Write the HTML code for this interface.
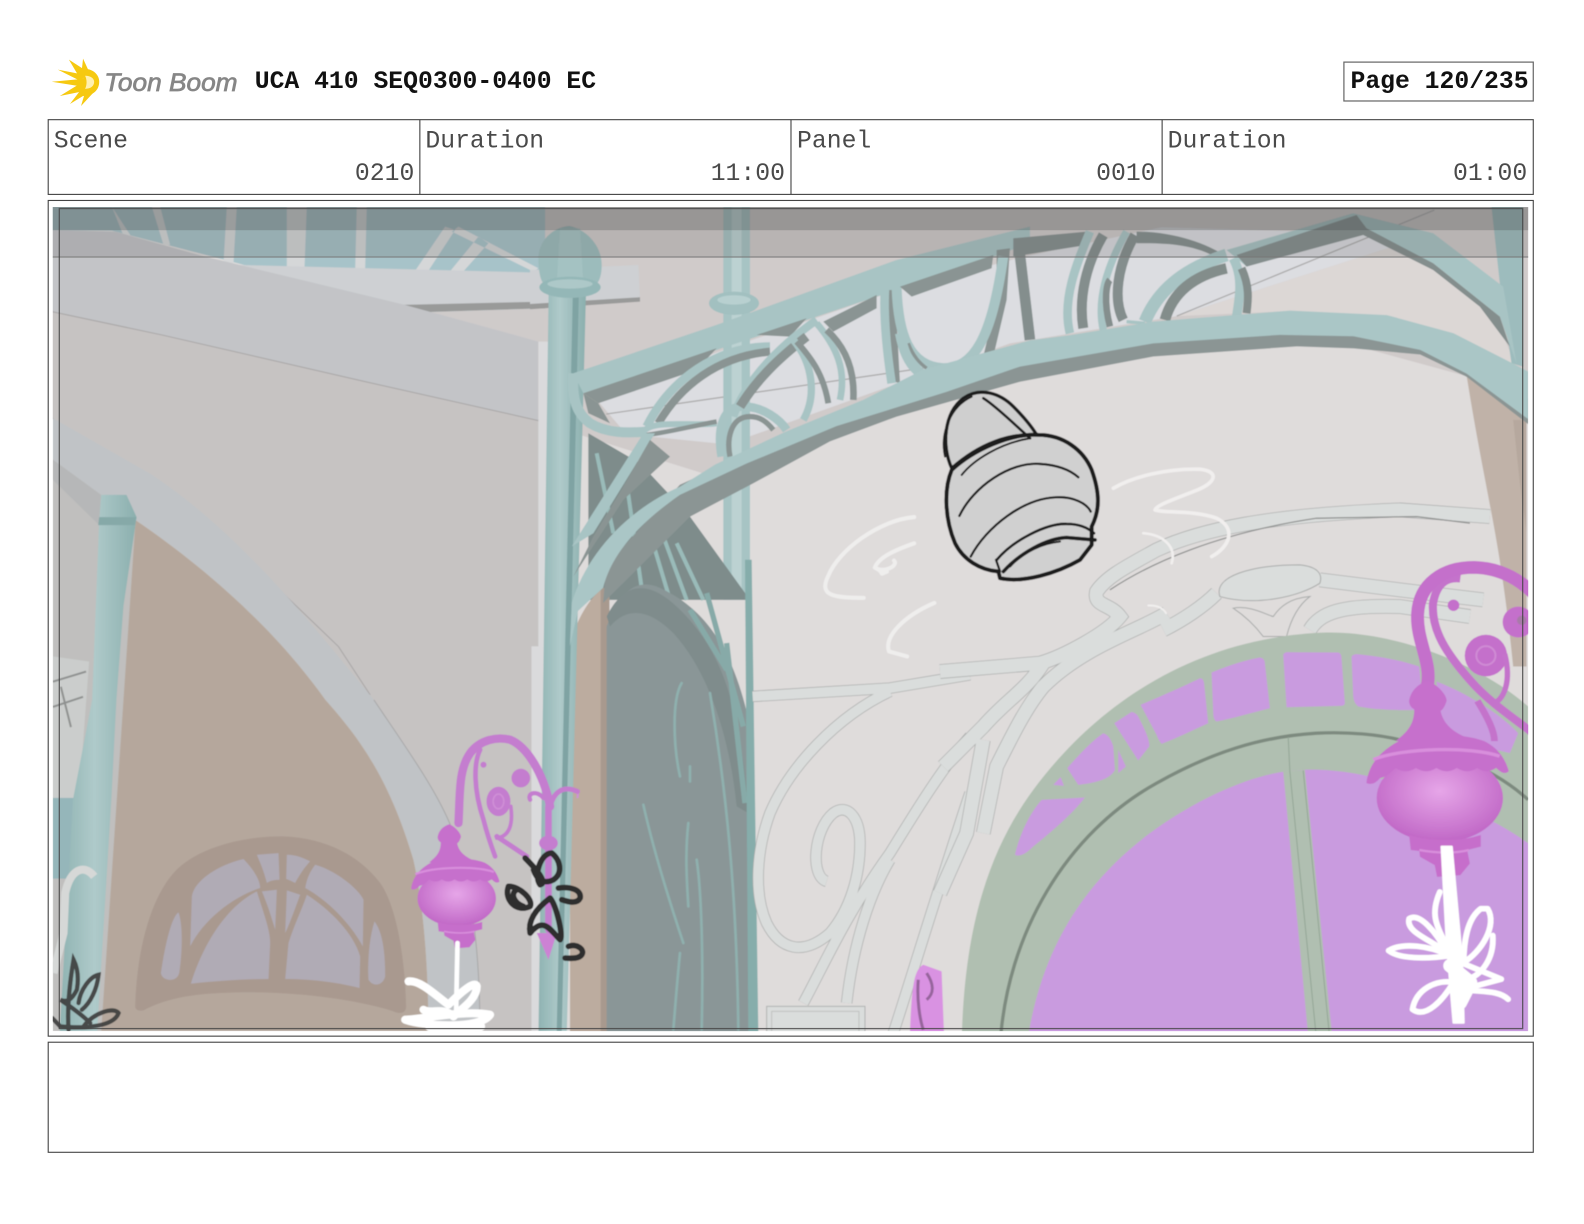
<!DOCTYPE html>
<html><head><meta charset="utf-8"><title>Storyboard page 120</title>
<style>html,body{margin:0;padding:0;background:#fff;width:1584px;height:1224px;overflow:hidden}svg{display:block}
.m{font-family:"Liberation Mono",monospace;font-size:24.5px;fill:#4a4a4a}
.b{font-weight:bold;fill:#111}
</style></head><body>
<svg width="1584" height="1224" viewBox="0 0 1568 1212" xmlns="http://www.w3.org/2000/svg" style="overflow:hidden">
<defs>
<clipPath id="pic"><rect x="52" y="205" width="1461" height="816"/></clipPath>
<filter id="soft" x="0" y="0" width="100%" height="100%"><feGaussianBlur stdDeviation="0.55"/></filter>
<radialGradient id="gl" cx="50%" cy="42%" r="58%"><stop offset="0" stop-color="#e6a6e8"/><stop offset="1" stop-color="#c067c6"/></radialGradient>
<linearGradient id="col" x1="0" x2="1" y1="0" y2="0"><stop offset="0" stop-color="#8fb3b2"/><stop offset=".45" stop-color="#afcaca"/><stop offset="1" stop-color="#8bafae"/></linearGradient>
<g id="lampbody">
<path d="M320,480C325,450 345,430 375,420C400,430 430,460 430,480C425,495 420,505 412,510C420,550 450,575 500,595L280,600C320,570 335,545 335,505C325,500 320,490 320,480Z" fill="#c670cc"/>
<ellipse cx="410" cy="770" rx="185" ry="132" fill="url(#gl)"/>
<path d="M195,725C200,680 225,635 290,600C360,575 470,575 540,600C590,625 605,665 612,690C600,700 590,695 575,680Q545,700 520,680Q490,700 460,680Q430,700 400,680Q370,700 340,680Q310,700 280,680Q250,710 235,710Q215,735 195,725Z" fill="#c670cc"/>
<path d="M215,655C300,620 500,615 585,645" fill="none" stroke="#d88fdc" stroke-width="10"/>
<path d="M320,880C380,900 470,900 530,880L530,915L490,925L498,965L470,1000L402,1005L395,970L352,945L350,928L325,925Z" fill="#c66ecb"/>
<path d="M350,925C400,935 460,935 495,925" fill="none" stroke="#d88fdc" stroke-width="7"/>
</g>
</defs>

<!-- logo -->
<g fill="#f6c910">
<path d="M85,70L68,59L78,76Z"/><path d="M88,71L82,58L80,76Z"/>
<path d="M83,74L57,69L81,81Z"/><path d="M83,78L51,81L83,86Z"/>
<path d="M82,81L59,95L84,90Z"/><path d="M82,86L69,103L87,92Z"/>
<path d="M85,88L80,105L92,92Z"/>
<path d="M82,68C92,68 98,74 98,81C98,89 92,95 82,95Z"/>
</g>
<path d="M84,75C90,75 93,78 93,81C93,85 90,88 84,88C86,84 86,79 84,75Z" fill="#fff0b0"/>
<text x="103" y="90" font-family="'Liberation Sans',sans-serif" font-style="italic" font-size="25" fill="#868686" stroke="#868686" stroke-width=".7" textLength="132" lengthAdjust="spacingAndGlyphs">Toon Boom</text>

<text x="252" y="87" class="m b">UCA 410 SEQ0300-0400 EC</text>
<rect x="1330.5" y="61.5" width="187.5" height="38.5" fill="#fff" stroke="#666" stroke-width="1.2"/>
<text x="1337" y="87" class="m b">Page 120/235</text>

<!-- info table -->
<rect x="47.5" y="118.5" width="1470.5" height="74" fill="#fff" stroke="#444" stroke-width="1.1"/>
<path d="M415.5,118.5V192.5M783,118.5V192.5M1150.5,118.5V192.5" stroke="#444" stroke-width="1.1"/>
<text x="53" y="146" class="m">Scene</text>
<text x="421" y="146" class="m">Duration</text>
<text x="789" y="146" class="m">Panel</text>
<text x="1156" y="146" class="m">Duration</text>
<text x="410" y="178" class="m" text-anchor="end">0210</text>
<text x="777" y="178" class="m" text-anchor="end">11:00</text>
<text x="1144" y="178" class="m" text-anchor="end">0010</text>
<text x="1512" y="178" class="m" text-anchor="end">01:00</text>

<!-- frames -->
<rect x="47.5" y="198.5" width="1470.5" height="827.5" fill="#fff" stroke="#444" stroke-width="1.1"/>
<rect x="47.5" y="1032" width="1470.5" height="109" fill="#fff" stroke="#444" stroke-width="1.1"/>

<g clip-path="url(#pic)"><g filter="url(#soft)">
<rect x="52" y="205" width="1461" height="816" fill="#dfdcdb"/>

<!-- ceiling right -->
<path d="M530,205H1513V420L1450,372L1260,320L1000,350L700,470L540,420Z" fill="#d0cbca"/>
<path d="M590,395L720,345L880,290L1010,255L1150,225L1350,231L1389,241L1165,313L1000,340L720,440L620,430Z" fill="#dcdde1"/>
<path d="M1165,313L1389,241L1470,290L1500,360L1280,308Z" fill="#dcd7d5"/>
<path d="M1165,313L1420,208" stroke="#a9a8a8" stroke-width="1.2" fill="none"/>
<path d="M600,410L1000,352" stroke="#a9a8a8" stroke-width="1.2" fill="none"/>

<!-- Z11 left upper structures -->
<g transform="translate(44.5,198) scale(.33)">
<path d="M20,20H1500V340L1130,340L560,185L200,92L20,90Z" fill="#a7c3c9"/>
<path d="M200,20L240,120L265,120L200,20ZM320,20L355,135L375,135L345,20ZM545,20H575L565,190L535,190ZM725,20H785L778,210H725ZM935,20H965L960,215H930ZM1200,80L1105,220H1145L1230,90ZM1300,110L1210,220H1250L1330,130ZM1240,80L1480,205L1465,215L1220,95Z" fill="#d5d7d8"/>
<path d="M580,195L1480,218L1500,310L1090,318Z" fill="#ced0d3"/>
<path d="M1060,315L1500,305V325L1130,337Z" fill="#999a99"/>
<path d="M1130,337L1500,325V430L1480,425Z" fill="#cfcbca"/>
<path d="M20,90L210,95L480,170L1080,315L1480,425V662L960,545L350,405L20,335Z" fill="#c3c4c7"/>
<path d="M20,335L350,405L960,545L1480,662V1500H985L600,1080L290,820L20,655Z" fill="#c6c3c2"/>
<path d="M20,335L350,405L960,545L1480,662M20,655L290,820L620,1090L880,1340L985,1500" fill="none" stroke="#a8a6a6" stroke-width="3"/>
<path d="M1480,425H1520V1500H1480Z" fill="#dadadc"/>
</g>
<path d="M365,688H530V1021H470L445,815Z" fill="#c6c3c2"/>
<rect x="526" y="640" width="14" height="381" fill="#dadadc"/>

<!-- arch band and brown -->
<path d="M52,414L150,470C240,530 310,620 370,693C405,745 430,780 445,815C465,870 475,930 475,1021L424,1021C424,950 418,890 409,851C385,770 355,730 322,693C270,620 200,560 134,515L52,455Z" fill="#c0c3c6"/>
<path d="M370,693C405,745 430,780 445,815C465,870 475,930 475,1021" fill="none" stroke="#a8a8a8" stroke-width="1"/>
<path d="M134,515C200,560 270,620 322,693C355,730 385,770 409,851C418,890 424,950 424,1021H80L110,515Z" fill="#b5a79c"/>
<path d="M52,455L134,515L100,1021H52Z" fill="#c0bfbe"/>
<path d="M52,455L100,490L98,520L52,475Z" fill="#b6b7b8"/>
<path d="M52,790H90L80,870H52Z" fill="#95b6ba"/>
<path d="M52,650L88,655L78,790L52,790Z" fill="#cbcdcc"/>
<path d="M52,675L85,665M52,700L82,690M60,680L70,720" stroke="#8f9190" stroke-width="2"/>

<!-- left post -->
<path d="M100,490H125L135,512L122,600L115,693L110,792L96,1021H59L72,792L91,693L98,515Z" fill="url(#col)"/>
<path d="M98,512L135,512L133,520L97,520Z" fill="#86a9a8"/>

<!-- Z7 window on brown -->
<g transform="translate(39.6,791.9) scale(.33)">
<path d="M285,620C290,450 330,300 400,220C470,140 620,108 730,110C860,115 960,170 1020,250C1070,320 1095,480 1098,620C1098,640 1080,645 1060,635C920,590 700,570 540,580C440,585 370,600 310,632C295,635 285,630 285,620Z" fill="#a9998f"/>
<g fill="#b0abb5">
<path d="M455,290C460,250 520,200 610,178C640,210 660,240 660,265C580,290 490,360 450,440Z"/>
<path d="M650,165L715,160L718,240C700,240 685,245 680,250C670,210 660,190 650,165Z"/>
<path d="M740,165C770,165 790,175 810,185C790,205 770,240 765,250C755,245 745,240 738,238Z"/>
<path d="M825,195C880,210 950,260 970,300L968,440C930,370 860,300 795,265C800,235 810,215 825,195Z"/>
<path d="M452,552C490,430 560,320 650,275C670,340 690,390 690,430L685,538C600,538 520,545 452,552Z"/>
<path d="M665,275L710,270L705,390C690,340 680,310 665,275Z"/>
<path d="M740,272L780,285C760,340 745,380 735,400Z"/>
<path d="M800,285C870,330 940,400 960,470L958,565C880,545 800,538 735,538L745,430C760,380 785,330 800,285Z"/>
<path d="M415,338C395,350 375,430 362,520C365,545 410,550 417,520C425,470 430,380 415,338Z"/>
<path d="M1003,365C985,420 982,500 985,540C1000,565 1030,555 1035,530C1035,470 1030,400 1003,365Z"/>
</g>
<path d="M162,230C130,190 90,210 75,280L70,400L40,520" fill="none" stroke="#d6d8d7" stroke-width="24"/>
<g fill="none" stroke="#3c3c3c" stroke-width="13" stroke-linecap="round" opacity=".9">
<path d="M85,690C80,620 90,540 100,480C115,510 115,540 110,570C95,600 80,610 60,600C90,620 130,650 150,670"/>
<path d="M115,610C120,570 150,530 175,525C170,570 150,610 125,630"/>
<path d="M130,680C160,640 220,620 235,640C225,670 170,690 60,680L36,655"/>
</g>
</g>

<!-- Back column, slab -->
<g transform="translate(524.6,198) scale(.33)">
<path d="M0,210L325,195L330,300L0,320Z" fill="#ced0d3"/>
<path d="M0,312L330,292V305L0,328Z" fill="#999a99"/>
<rect x="580" y="20" width="80" height="1180" fill="#a7c4c4"/>
<rect x="605" y="20" width="30" height="1180" fill="#bcd2d2"/>
<ellipse cx="612" cy="310" rx="75" ry="35" fill="#a2c0c0"/>
<ellipse cx="612" cy="300" rx="50" ry="14" fill="#b8d0d0"/>
<!-- gate dark under arch -->
<path d="M175,700L330,790L480,950L660,1200H175Z" fill="#7e8c8b"/>
<g stroke="#9abbb9" fill="none" stroke-width="12"><path d="M200,760L250,1000M290,850L340,1200M360,1000L420,1200M400,1010L470,1200M440,1030L520,1200"/></g>
</g>

<!-- Door region Z8 -->
<g transform="translate(564.2,554.3) scale(.33)">
<path d="M0,1420V250C20,180 60,110 100,85L118,80V1420Z" fill="#bcac9f"/>
<rect x="92" y="85" width="26" height="1335" fill="#a8998e"/>
<path d="M110,200C150,90 200,60 260,80C400,140 490,260 540,500V1420H110Z" fill="#8a9697"/>
<path d="M110,170C170,50 250,70 330,150C440,260 510,400 535,760L500,740C480,540 420,340 310,220C250,160 180,130 120,200Z" fill="#7f8c8c"/>
<g stroke="#8fb0ae" fill="none" stroke-width="8" stroke-linecap="round">
<path d="M335,370C305,420 310,560 330,650"/><path d="M360,620V665"/><path d="M220,735C250,870 300,1030 340,1150"/>
<path d="M355,790C345,880 350,960 355,1040"/><path d="M380,900C395,1000 400,1200 395,1410"/>
<path d="M330,1180C320,1280 315,1350 310,1410"/><path d="M420,400C470,700 500,1000 505,1410"/>
</g>
<g stroke="#87aaa8" fill="none" stroke-width="16"><path d="M360,150L470,330M410,100L520,500M470,250L525,730"/></g>
<path d="M525,0H545L565,1420H535Z" fill="#86adab"/>
<path d="M0,700C15,680 28,690 22,715" fill="none" stroke="#cf8fd8" stroke-width="6"/>
</g>

<!-- main column -->
<path d="M543,290H580L561,1021H533Z" fill="url(#col)"/>
<path d="M567,290H573L556,1021H551Z" fill="#7fa3a3"/>
<g transform="translate(524.6,198) scale(.33)">
<path d="M25,170C30,110 80,80 118,78C160,85 215,130 215,195C215,230 205,250 195,255H45C30,245 25,210 25,170Z" fill="#9cbcbc"/>
<path d="M90,85H150L160,250H80Z" fill="#aac6c6" opacity=".6"/>
<ellipse cx="120" cy="262" rx="92" ry="32" fill="#94b7b7"/>
<ellipse cx="120" cy="252" rx="68" ry="14" fill="#adc8c8"/>
</g>

<!-- Ornament on wall Z8 -->
<g transform="translate(564.2,554.3) scale(.33)" fill="none">
<g stroke="#a8aaa9" stroke-width="34" stroke-linecap="butt">
<path d="M548,410L960,385L1200,345"/>
<path d="M960,395C800,470 660,620 600,760C560,870 550,1000 590,1090C630,1170 700,1190 780,1120C840,1050 870,950 870,850C870,770 830,730 790,760C730,810 720,950 770,965"/>
<path d="M700,1330C760,1220 830,1060 960,880C1040,750 1120,620 1200,530"/>
<path d="M830,1330C850,1150 900,1000 960,900"/>
<path d="M970,1420C1010,1300 1100,1000 1200,700"/>
</g>
<g stroke="#dadddc" stroke-width="30">
<path d="M548,410L960,385L1200,345"/>
<path d="M960,395C800,470 660,620 600,760C560,870 550,1000 590,1090C630,1170 700,1190 780,1120C840,1050 870,950 870,850C870,770 830,730 790,760C730,810 720,950 770,965"/>
<path d="M700,1330C760,1220 830,1060 960,880C1040,750 1120,620 1200,530"/>
<path d="M830,1330C850,1150 900,1000 960,900"/>
<path d="M970,1420C1010,1300 1100,1000 1200,700"/>
</g>
<rect x="590" y="1340" width="295" height="85" fill="#dadddc" stroke="#b0b2b1" stroke-width="3"/>
<rect x="605" y="1355" width="262" height="70" stroke="#bfc1c0" stroke-width="3"/>
<path d="M1020,1420C1025,1290 1030,1230 1060,1215L1115,1235L1122,1420Z" fill="#d992e2" stroke="none"/>
<path d="M1045,1260C1040,1320 1050,1380 1060,1410M1070,1240C1090,1270 1095,1300 1070,1320" stroke="#96659c" stroke-width="9"/>
</g>

<!-- Ornament wall + window Z9 -->
<g transform="translate(940.4,495) scale(.33)">
<g fill="none">
<g stroke="#a9abaa" stroke-width="44">
<path d="M-30,515L270,490C340,470 470,400 510,350C480,310 430,320 440,275C470,230 530,200 620,150C750,90 950,45 1350,30L1620,50"/>
<path d="M650,340C570,390 400,440 280,560C230,620 190,700 140,800L100,1000"/>
<path d="M280,490C230,570 170,600 100,680L-20,800"/>
<path d="M800,280C760,320 700,360 640,390"/>
<path d="M1110,240L1350,270L1600,300"/>
<path d="M1080,390C1110,340 1170,315 1350,320L1560,350"/>
<path d="M100,720L50,1000L-30,1180"/>
</g>
<g stroke="#dadddc" stroke-width="40">
<path d="M-30,515L270,490C340,470 470,400 510,350C480,310 430,320 440,275C470,230 530,200 620,150C750,90 950,45 1350,30L1620,50"/>
<path d="M650,340C570,390 400,440 280,560C230,620 190,700 140,800L100,1000"/>
<path d="M280,490C230,570 170,600 100,680L-20,800"/>
<path d="M800,280C760,320 700,360 640,390"/>
<path d="M1110,240L1350,270L1600,300"/>
<path d="M1080,390C1110,340 1170,315 1350,320L1560,350"/>
<path d="M100,720L50,1000L-30,1180"/>
</g>
<path d="M480,270C600,190 800,100 1100,55L1400,50L1560,70" stroke="#8a8c8b" stroke-width="3.5"/>
</g>
<path d="M810,290C790,230 900,195 1050,195C1100,200 1120,220 1110,250C1050,290 920,320 810,290Z" fill="#dadddc" stroke="#a9abaa" stroke-width="3"/>
<path d="M850,325C900,315 950,345 970,350C990,320 1020,295 1080,290C1040,320 1020,370 1010,410L940,410C910,370 880,345 850,325Z" fill="#dfdcdb" stroke="#a9abaa" stroke-width="3"/>

<path d="M35,1640C40,1300 110,1060 250,870C450,600 750,410 1130,398C1350,395 1600,500 1735,620V1640Z" fill="#b0bfb1"/>
<g fill="#c99bdf">
<path d="M1000,465Q1003,455 1020,457L1165,458Q1175,460 1175,475L1185,610Q1185,618 1170,618L1010,622Z"/>
<path d="M1205,470Q1210,462 1225,463C1290,470 1350,480 1408,500L1420,630C1340,632 1280,630 1225,620Q1212,610 1210,590Z"/>
<path d="M1460,545C1550,580 1650,640 1705,700L1680,760C1600,740 1520,730 1480,730Z"/>
<path d="M785,518C840,495 890,480 930,473Q945,475 945,490L960,625C900,640 850,655 800,665Q790,660 790,640Z"/>
<path d="M572,615C630,590 700,560 750,535Q762,535 763,555L775,670C730,690 680,715 635,732Q625,720 620,705Z"/>
<path d="M493,670L545,636Q560,640 565,650C585,690 600,720 598,740L565,782Z"/>
<path d="M352,805C390,760 430,720 460,700Q480,705 490,740L495,810C480,840 430,850 385,855Z"/>
<path d="M505,750L528,800L505,820Z"/><path d="M310,855L332,832L342,858Z"/>
<path d="M195,1065C210,1000 240,940 275,900L405,893C370,940 300,1000 250,1040Q215,1075 195,1065Z"/>
<path d="M230,1640C270,1350 400,1150 600,1000C750,890 900,830 1005,815L1060,810C1250,800 1550,900 1735,1030V1640Z"/>
</g>
<path d="M150,1640C170,1300 350,1000 620,850C780,760 930,710 1100,700C1200,695 1290,705 1350,720C1500,750 1650,820 1735,900" fill="none" stroke="#7d8a7f" stroke-width="10"/>
<path d="M1000,815L1065,810L1150,1640H1078Z" fill="#b0bfb1"/>
<path d="M1015,712L1020,815L1102,1640M1060,812L1142,1640" fill="none" stroke="#93a595" stroke-width="3"/>
</g>

<!-- Right brown strip -->
<g transform="translate(1009.7,198) scale(.33)">
<path d="M1340,525L1520,650V1400H1480C1440,1000 1400,900 1340,525Z" fill="#c0b2a8"/>
<path d="M1480,660L1520,660V1000L1500,850Z" fill="#b6a89e"/>
<path d="M1415,20H1510V500L1475,490L1440,250Z" fill="#9dbcbd"/>
</g>

<!-- Rail + struts Z6 -->
<g transform="translate(524.6,198) scale(.33)">
<path d="M130,520L560,375L1100,180L1500,80V130L1390,170L1040,290L560,450L160,580Z" fill="#a8c4c4"/>
<path d="M130,520C125,600 140,640 180,670C230,700 290,700 350,695" fill="none" stroke="#a8c4c4" stroke-width="30"/>
<g fill="#8a9493">
<path d="M160,580L560,445L500,510L205,610Z"/>
<path d="M680,405L830,355L780,410Z"/>
<path d="M880,365L1040,285L1040,325L910,395Z"/>
<path d="M1110,260L1390,165L1385,205L1145,290Z"/>
<path d="M1070,270H1095L1110,550L1075,540Z"/>
<path d="M1400,150L1440,145L1430,300L1390,470L1360,470L1400,300Z"/>
<path d="M160,580L205,610L240,670L175,640Z"/>
</g>
<g fill="none">
<path d="M350,680C420,540 560,440 720,440" stroke="#a8c4c4" stroke-width="26"/>
<path d="M385,670C450,560 560,470 720,455" stroke="#8a9493" stroke-width="24"/>
<path d="M345,690C380,660 490,680 560,670" stroke="#a8c4c4" stroke-width="18"/>
<path d="M350,705C400,700 480,680 560,665" stroke="#8a9493" stroke-width="14"/>
<path d="M575,770C560,680 580,620 640,620C700,620 750,660 770,690" stroke="#a8c4c4" stroke-width="26"/>
<path d="M600,770C590,720 600,650 660,650C690,650 710,665 730,690" stroke="#8a9493" stroke-width="16"/>
<path d="M610,650C640,560 720,460 860,360" stroke="#a8c4c4" stroke-width="24"/>
<path d="M630,620C680,540 740,480 830,410" stroke="#8a9493" stroke-width="28"/>
<path d="M820,660C860,590 850,490 790,420" stroke="#a8c4c4" stroke-width="22"/>
<path d="M895,610C880,520 840,470 800,425" stroke="#8a9493" stroke-width="18"/>
<path d="M930,600C950,510 920,440 860,370" stroke="#a8c4c4" stroke-width="20"/>
<path d="M970,600C975,510 945,440 890,390" stroke="#8a9493" stroke-width="20"/>
<path d="M1085,550C1070,450 1060,350 1065,265" stroke="#a8c4c4" stroke-width="26"/>
<path d="M1100,265C1105,400 1135,500 1240,505C1330,505 1385,420 1420,170" stroke="#a8c4c4" stroke-width="30"/>
<path d="M1135,430C1150,470 1170,490 1190,505" stroke="#8a9493" stroke-width="10"/>
<path d="M1110,400C1130,510 1180,540 1250,540" stroke="#a8c4c4" stroke-width="30"/>
<path d="M1250,530C1320,520 1360,480 1400,470" stroke="#a8c4c4" stroke-width="40"/>
</g>
<path d="M125,1040L340,700L375,700L190,1000Z" fill="#a8c4c4"/>
<path d="M360,720L280,860L190,1010L130,1130L280,900L420,770Z" fill="#8a9493"/>
</g>

<!-- Z10 arcs upper right -->
<g transform="translate(1009.7,198) scale(.33)">
<path d="M620,150L1000,40L1240,100L1450,260L1490,490L1440,350L1240,190L1030,90L680,200Z" fill="#a8c4c4"/>
<path d="M650,165L1010,45L1040,85L1240,190L1440,350L1470,440L1380,320L1240,210L1030,105L680,200Z" fill="#848e8d"/>
<path d="M-20,115L200,95L200,135L-20,170Z" fill="#848e8d"/>
<path d="M350,95C460,95 560,130 620,170L585,170C510,130 430,130 350,130Z" fill="#848e8d"/>
<g fill="none">
<path d="M0,165L30,420" stroke="#848e8d" stroke-width="32"/>
<path d="M375,365C410,280 480,210 620,165" stroke="#a8c4c4" stroke-width="38"/>
<path d="M435,360C460,270 530,225 620,205" stroke="#838d8b" stroke-width="32"/>
<path d="M640,175C670,230 660,290 650,350" stroke="#a8c4c4" stroke-width="28"/>
<path d="M665,205C690,260 685,300 680,340" stroke="#838d8b" stroke-width="24"/>
<path d="M150,400C125,300 170,190 210,95" stroke="#a8c4c4" stroke-width="26"/>
<path d="M190,385C175,290 200,190 250,105" stroke="#848e8d" stroke-width="30"/>
<path d="M250,390C230,300 260,200 320,95" stroke="#a8c4c4" stroke-width="22"/>
<path d="M270,380C250,300 260,250 270,240" stroke="#848e8d" stroke-width="20"/>
<path d="M310,360C280,300 290,200 345,105" stroke="#848e8d" stroke-width="30"/>
<path d="M320,365L375,370" stroke="#a8c4c4" stroke-width="10"/>
</g>
</g>

<!-- unified lower arch band (prompt coords) -->
<path d="M597,597L683,511.5L745.7,478.5L821.6,437L887.6,412.5L1009.7,378L1141.7,353L1284,343L1340,345L1406,351L1452,373L1513,420V395L1452,360L1340,325L1141,330L1009,360L887,400L739,450L673,480L600,560Z" fill="#8b9594"/>
<path d="M564,640L566,597C580,550 620,505 673,482L708,460L778.7,427L854.6,396L914,366L1019.6,337L1059,332L1141.7,318.5L1277,307.6L1373,312L1439,330L1498,360L1513,368V415L1452,370L1406,346.5L1340,333L1267,331.6L1141.7,340L1009.7,363L937,388L828,422L739,459L673,490C630,520 605,550 597,582L572,605Z" fill="#aac6c6"/>

<!-- Right lamp -->
<g transform="translate(1286.9,534.6) scale(.338,.332)">
<path d="M700,590C640,540 560,490 500,420C430,340 385,270 390,190C400,130 430,110 470,115" fill="none" stroke="#c473cb" stroke-width="24"/>
<path d="M372,440C390,370 340,300 345,220C350,130 420,82 510,82C590,84 650,120 700,175" fill="none" stroke="#c46fcb" stroke-width="38"/>
<circle cx="450" cy="195" r="17" fill="#c46fcb"/>
<circle cx="545" cy="345" r="62" fill="#c470cb"/>
<circle cx="545" cy="345" r="28" fill="none" stroke="#cf8bd4" stroke-width="6"/>
<path d="M600,340C620,420 600,480 560,490" fill="none" stroke="#c473cb" stroke-width="16"/>
<circle cx="640" cy="245" r="46" fill="#c470cb"/>
<circle cx="650" cy="240" r="14" fill="#a87aa8"/>
<path d="M520,480C550,530 570,570 570,600" fill="none" stroke="#c473cb" stroke-width="20"/>
<use href="#lampbody"/>
<g fill="none" stroke="#fff" stroke-linecap="round" stroke-linejoin="round">
<path d="M415,915L445,915L475,1250L480,1440L450,1440L430,1200Z" fill="#fff" stroke-width="6"/>
<g stroke-width="17">
<path d="M410,1050C380,1120 400,1150 440,1230"/>
<path d="M320,1130C350,1110 400,1170 430,1230C380,1190 310,1170 320,1130"/>
<path d="M260,1225C300,1200 380,1210 440,1240C370,1250 290,1250 260,1225"/>
<path d="M530,1100C490,1130 480,1200 480,1260C530,1230 580,1150 550,1100Z"/>
<path d="M565,1180C570,1250 530,1300 490,1310"/>
<path d="M470,1260L590,1310L480,1340"/>
<path d="M330,1400C340,1340 400,1310 450,1320C420,1370 370,1430 330,1400"/>
<path d="M480,1340C520,1350 580,1340 610,1370"/>
</g>
<path d="M440,1270L500,1320L470,1380" stroke-width="40"/>
</g>
</g>

<!-- Left lamp crook Z4 -->
<g transform="translate(376.2,702.8) scale(.33)" fill="none" stroke="#c47dcf" stroke-linecap="round">
<path d="M235,340C240,250 235,180 270,130C300,90 350,80 390,90C440,110 490,190 510,290" stroke-width="25"/>
<path d="M300,120C280,160 280,240 310,330C320,370 330,400 345,440" stroke-width="14"/>
<circle cx="310" cy="165" r="9" fill="#c47dcf" stroke="none"/>
<ellipse cx="355" cy="275" rx="36" ry="44" fill="#c47dcf" stroke="none"/>
<ellipse cx="355" cy="275" rx="16" ry="22" stroke="#cf8fd6" stroke-width="5"/>
<circle cx="422" cy="205" r="28" fill="#c47dcf" stroke="none"/>
<path d="M392,290C400,350 385,380 350,385" stroke-width="11"/>
<path d="M350,380L440,440" stroke-width="15"/>
<path d="M450,270C440,250 470,240 490,265" stroke-width="13"/>
<path d="M510,290C520,250 545,225 592,245" stroke-width="15"/>
<path d="M505,290L505,660" stroke-width="20"/>
<ellipse cx="505" cy="400" rx="28" ry="22" fill="#c47dcf" stroke="none"/>
<path d="M470,670L530,670L505,750Z" fill="#cc82d4" stroke="none"/>
</g>
<g transform="translate(365.9,728) scale(.21)"><use href="#lampbody"/></g>

<!-- Left lamp scribbles Z4 -->
<g transform="translate(376.2,702.8) scale(.33)" fill="none" stroke-linecap="round" stroke-linejoin="round">
<g stroke="#2e2e2e" stroke-width="17">
<path d="M435,445C480,490 500,520 480,525C460,500 480,430 515,430C540,450 550,490 520,510C490,525 470,510 460,480"/>
<path d="M385,530C370,570 410,610 450,590C460,570 420,530 385,530"/>
<path d="M430,590C400,580 390,550 410,540"/>
<path d="M450,670C440,620 490,580 510,565C530,590 550,680 540,690C510,660 490,620 450,670"/>
<path d="M535,535C570,530 605,540 600,565C590,585 560,575 545,570"/>
<path d="M565,710C590,700 615,720 605,735C595,750 565,745 555,745"/>
</g>
<g stroke="#fff">
<path d="M232,700L228,900" stroke-width="14"/>
<g stroke-width="24">
<path d="M85,815C120,810 170,860 205,885"/>
<path d="M210,880C240,850 285,810 290,830C290,870 240,900 220,920"/>
<path d="M75,930C120,930 250,900 330,915C300,960 130,950 75,930"/>
<path d="M130,900C150,915 190,890 220,920"/>
</g>
<path d="M150,950H300" stroke-width="30"/>
</g>
</g>

<!-- Jar sketch Z3 -->
<g transform="translate(891,366.3) scale(.33)" stroke-linecap="round" stroke-linejoin="round">
<path d="M155,295C125,230 130,130 190,85C240,50 300,70 340,110C370,140 395,170 410,195C330,190 240,220 155,295Z" fill="#cfcfcf" stroke="#1b1b1b" stroke-width="10"/>
<path d="M155,300C130,360 135,450 165,520C190,570 240,600 295,605L300,625C370,640 470,610 540,570L575,525L575,470C600,420 600,370 575,300C550,240 490,195 415,195C330,190 220,240 155,300Z" fill="#d0d0d0" stroke="#1b1b1b" stroke-width="12"/>
<g fill="none" stroke="#1b1b1b">
<path d="M135,260C120,190 150,110 215,80" stroke-width="6"/>
<path d="M250,85C290,110 350,170 390,205" stroke-width="8"/>
<path d="M185,315C220,270 300,220 390,205" stroke-width="6"/>
<path d="M178,438C220,350 330,275 420,282C470,285 510,300 535,322" stroke-width="7"/>
<path d="M212,560C260,470 370,385 470,382C520,380 560,400 572,425" stroke-width="7"/>
<path d="M290,570C340,510 440,460 500,462C530,462 560,470 582,490" stroke-width="8"/>
<path d="M310,605C360,550 440,505 500,503L585,510" stroke-width="11"/>
<path d="M330,590C370,545 430,520 480,515" stroke-width="6"/>
<path d="M288,570L300,605" stroke-width="7"/>
</g>
<g fill="none" stroke="#f1efee" stroke-width="11">
<path d="M640,355C700,320 800,295 900,298C960,305 950,340 880,365C830,385 770,405 765,420C790,430 880,420 950,445C1010,475 990,530 935,560"/>
<path d="M730,490C790,495 830,530 815,580" stroke-width="8"/>
<path d="M745,707C770,705 790,715 798,730" stroke-width="6"/>
</g>
</g>
<!-- white wisps left -->
<g fill="none" stroke="#efeeed" stroke-linecap="round" stroke-linejoin="round" stroke-width="4">
<path d="M905,512C870,515 830,545 820,570C810,590 825,592 855,592"/>
<path d="M905,538C885,545 870,552 866,562C875,568 890,560 885,555M866,562C878,568 868,570 878,566"/>
<path d="M925,597C895,610 875,630 880,645L898,650"/>
</g>

</g></g>

<!-- top overlay bands -->
<rect x="52" y="205" width="1461" height="23" fill="#4a4d4d" opacity=".42"/>
<rect x="52" y="228" width="1461" height="26" fill="#585858" opacity=".2"/>
<rect x="52" y="254" width="1461" height="1" fill="#777"/>
<rect x="58.5" y="206.5" width="1449" height="812" fill="none" stroke="#444" stroke-width="1.3" opacity=".8"/>
</svg>
</body></html>
